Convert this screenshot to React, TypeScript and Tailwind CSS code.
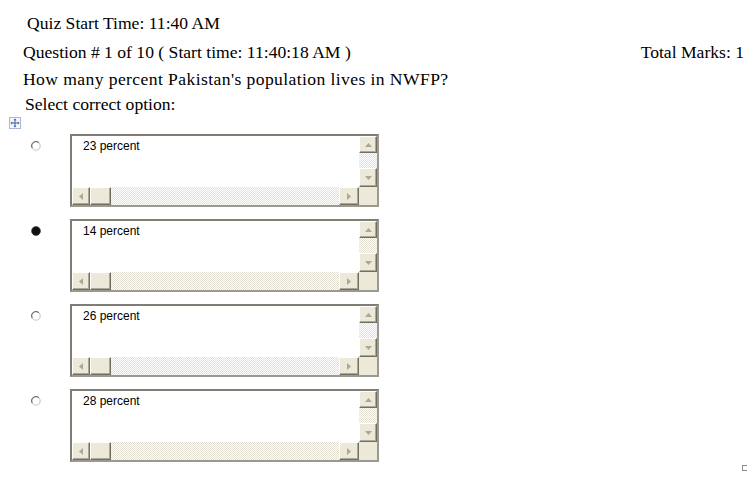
import React from 'react';

const options = [
  { label: '23 percent', checked: false },
  { label: '14 percent', checked: true },
  { label: '26 percent', checked: false },
  { label: '28 percent', checked: false },
];

function Arrow({ dir }: { dir: 'up' | 'down' | 'left' | 'right' }) {
  const pts: Record<string, string> = {
    up: '0,4 7,4 3.5,0',
    down: '0,0 7,0 3.5,4',
    left: '4,0 4,7 0,3.5',
    right: '0,0 0,7 4,3.5',
  };
  const vertical = dir === 'up' || dir === 'down';
  return (
    <svg width={vertical ? 7 : 4} height={vertical ? 4 : 7} viewBox={vertical ? '0 0 7 4' : '0 0 4 7'}>
      <polygon points={pts[dir]} fill="#aca899" />
    </svg>
  );
}

function ScrollButton({ dir, className }: { dir: 'up' | 'down' | 'left' | 'right'; className: string }) {
  return (
    <div
      className={`flex items-center justify-center bg-[#ece9d8] border border-t-white border-l-white border-r-[#716f64] border-b-[#716f64] shadow-[inset_-1px_-1px_0_#aca899] ${className}`}
    >
      <Arrow dir={dir} />
    </div>
  );
}

function Radio({ checked }: { checked: boolean }) {
  return (
    <svg width="10" height="10" viewBox="0 0 10 10" className="shrink-0">
      {checked ? (
        <>
          <circle cx="5" cy="5" r="4.5" fill="#111" />
          <circle cx="5" cy="5" r="4.5" fill="none" stroke="#444" strokeWidth="0.6" />
        </>
      ) : (
        <>
          <circle cx="5" cy="5" r="4.2" fill="none" stroke="#c4c4c4" strokeWidth="1.1" />
          <path d="M1.3 7 A4.2 4.2 0 0 1 7.8 1.8" fill="none" stroke="#6e6e6e" strokeWidth="1.1" />
        </>
      )}
    </svg>
  );
}

function MoveIcon() {
  return (
    <div className="w-[12px] h-[12px] border border-[#a9b9cf] bg-[#f4f7fb] flex items-center justify-center">
      <svg width="10" height="10" viewBox="0 0 10 10">
        <path d="M5 1 L5 9 M1 5 L9 5" stroke="#3b64a8" strokeWidth="1" />
        <path d="M5 0.5 L3.5 2.2 L6.5 2.2 Z M5 9.5 L3.5 7.8 L6.5 7.8 Z M0.5 5 L2.2 3.5 L2.2 6.5 Z M9.5 5 L7.8 3.5 L7.8 6.5 Z" fill="#3b64a8" />
      </svg>
    </div>
  );
}

function AnswerBox({ label }: { label: string }) {
  return (
    <div className="w-[309px] h-[73px] border-2 border-t-[#7f7d74] border-l-[#7f7d74] border-r-[#9c9a90] border-b-[#9c9a90] bg-white flex">
      <div className="w-[287px] flex flex-col">
        <div className="flex-1 pl-[11px] pt-[3px] text-[12px] leading-[14px] font-['Liberation_Sans',Arial,sans-serif] text-black">
          {label}
        </div>
        <div className="h-[18px] flex">
          <ScrollButton dir="left" className="w-[18px] h-[18px]" />
          <div className="w-[21px] h-[18px] bg-[#ece9d8] border border-t-white border-l-white border-r-[#716f64] border-b-[#716f64] shadow-[inset_-1px_-1px_0_#aca899]" />
          <div className="flex-1 bg-[image:repeating-conic-gradient(#e4e1d4_0%_25%,#ffffff_0%_50%)] bg-[length:2px_2px]" />
          <ScrollButton dir="right" className="w-[20px] h-[18px]" />
        </div>
      </div>
      <div className="w-[18px] flex flex-col">
        <ScrollButton dir="up" className="h-[17px]" />
        <div className="h-[15px] bg-[image:repeating-conic-gradient(#e4e1d4_0%_25%,#ffffff_0%_50%)] bg-[length:2px_2px]" />
        <ScrollButton dir="down" className="h-[19px]" />
        <div className="h-[18px] bg-[#ece9d8]" />
      </div>
    </div>
  );
}

export default function App() {
  return (
    <div className="relative w-[749px] h-[477px] bg-white overflow-hidden text-black">
      <div className="pt-[10px] font-['Liberation_Serif','Times_New_Roman',serif] text-[17.6px]">
        <div className="h-[27px] pl-[27px] flex items-center">Quiz Start Time: 11:40 AM</div>
        <div className="h-[30px] pl-[23px] pr-[5px] flex items-center justify-between">
          <span>Question # 1 of 10 ( Start time: 11:40:18 AM )</span>
          <span>Total Marks: 1</span>
        </div>
        <div className="h-[25px] pl-[23px] flex items-center tracking-[0.4px]">
          How many percent Pakistan's population lives in NWFP?
        </div>
        <div className="h-[25px] pl-[25px] flex items-center">Select correct option:</div>
      </div>

      <div className="pl-[9px]">
        <MoveIcon />
      </div>

      <div className="mt-[5px] flex flex-col gap-[12px]">
        {options.map((o) => (
          <div key={o.label} className="flex">
            <div className="ml-[31px] mt-[7px]">
              <Radio checked={o.checked} />
            </div>
            <div className="ml-[29px]">
              <AnswerBox label={o.label} />
            </div>
          </div>
        ))}
      </div>

      <div className="absolute left-[742px] top-[465px] w-[5px] h-[6px] border border-r-0 border-[#8a8a8a]" />
    </div>
  );
}
